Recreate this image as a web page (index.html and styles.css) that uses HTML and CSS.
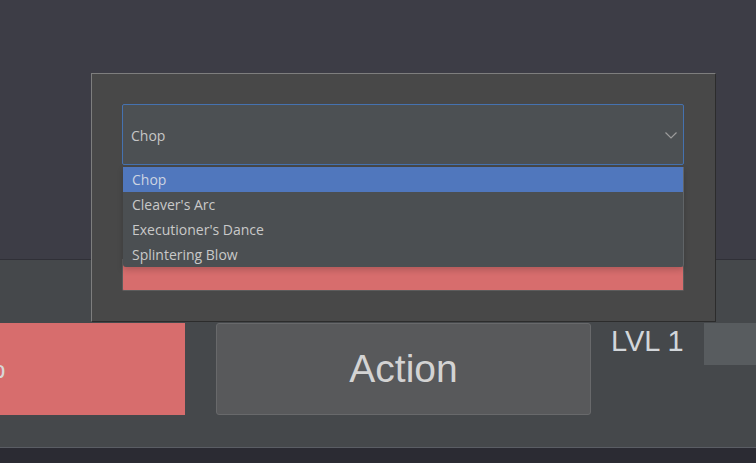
FILE: index.html
```html
<!DOCTYPE html>
<html>
<head>
<meta charset="utf-8">
<link rel="stylesheet" href="styles.css">
</head>
<body>
<div class="app">
  <div class="top-band"></div>
  <div class="mid-band">
    <div class="action-row">
      <div class="btn-red"><span class="btn-red-label">Stop</span></div>
      <div class="btn-action">Action</div>
      <div class="lvl">LVL 1</div>
      <div class="lvl-box"></div>
    </div>
  </div>
  <div class="bottom-band"></div>

  <div class="dialog">
    <div class="combo-wrap">
      <div class="combo">
        <span class="combo-value">Chop</span>
        <svg class="chevron" width="12" height="7" viewBox="0 0 12 7"><path d="M0.5 0.5 L6 6 L11.5 0.5" fill="none" stroke="#9c9c9c" stroke-width="1.2"/></svg>
      </div>
      <ul class="list">
        <li class="item selected">Chop</li>
        <li class="item">Cleaver's Arc</li>
        <li class="item">Executioner's Dance</li>
        <li class="item">Splintering Blow</li>
      </ul>
    </div>
    <div class="red-bar"></div>
  </div>
</div>
</body>
</html>
```

FILE: styles.css
```css
* { box-sizing: border-box; }
html, body {
  margin: 0;
  padding: 0;
  width: 756px;
  height: 463px;
  overflow: hidden;
  background: #2b2b33;
}
.app {
  position: relative;
  width: 756px;
  height: 463px;
  display: flex;
  flex-direction: column;
  font-family: "Liberation Sans", Arial, sans-serif;
}
.top-band {
  height: 260px;
  background: #3d3d46;
  border-bottom: 1px solid #303037;
}
.mid-band {
  height: 188px;
  background: #45484b;
  border-bottom: 1px solid #5a5d64;
  padding-top: 63px;
  overflow: hidden;
}
.bottom-band {
  flex: 1;
  background: #2b2b33;
}
.action-row {
  display: flex;
  align-items: flex-start;
  height: 92px;
}
.btn-red {
  width: 185px;
  height: 92px;
  background: #d76d6d;
  display: flex;
  align-items: center;
  overflow: hidden;
  flex-shrink: 0;
}
.btn-red-label {
  font-size: 24px;
  color: #d8d8d8;
  margin-left: -44px;
  margin-top: 2px;
}
.btn-action {
  margin-left: 31px;
  width: 375px;
  height: 92px;
  background: #58595b;
  border: 1px solid #68696b;
  border-radius: 3px;
  display: flex;
  align-items: center;
  justify-content: center;
  font-size: 39px;
  color: #d3d3d3;
  flex-shrink: 0;
}
.lvl {
  margin-left: 20px;
  padding-top: 4px;
  font-size: 29px;
  line-height: 1;
  color: #d2d6da;
  width: 93px;
  flex-shrink: 0;
}
.lvl-box {
  width: 60px;
  height: 42px;
  background: #585c5f;
  flex-shrink: 0;
}

.dialog {
  position: absolute;
  left: 91px;
  top: 73px;
  width: 625px;
  height: 249px;
  background: #484848;
  border-top: 1px solid #7e7e7e;
  border-left: 1px solid #7e7e7e;
  border-right: 1px solid #2c2c2c;
  border-bottom: 1px solid #2c2c2c;
  padding: 30px 31px 0 30px;
  font-family: "Open Sans", "Noto Sans", sans-serif;
}
.combo-wrap {
  position: relative;
}
.combo {
  height: 61px;
  background: #4c5053;
  border: 1px solid #4572b0;
  border-radius: 2px;
  display: flex;
  align-items: center;
  justify-content: space-between;
  padding: 1px 6px 0 8px;
}
.combo-value {
  font-size: 14px;
  color: #c6c6c6;
}
.chevron {
  display: block;
  margin-top: 1px;
}
.list {
  position: absolute;
  z-index: 2;
  left: 1px;
  top: 63px;
  right: 0;
  margin: 0;
  padding: 0;
  list-style: none;
  background: #4b4f52;
  border-right: 1px solid #606467;
  border-radius: 0 0 3px 3px;
  box-shadow: 0 3px 6px rgba(0, 0, 0, 0.18);
  overflow: hidden;
}
.item {
  height: 25px;
  line-height: 25px;
  padding-left: 9px;
  font-size: 14px;
  color: #c9c9c9;
}
.item.selected {
  background: #5077bd;
  color: #cdd4e2;
}
.red-bar {
  margin-top: 94px;
  height: 32px;
  background: #d76d6d;
  border: 1px solid #5c5c5c;
  border-top: none;
  border-radius: 0 0 2px 2px;
}
```
